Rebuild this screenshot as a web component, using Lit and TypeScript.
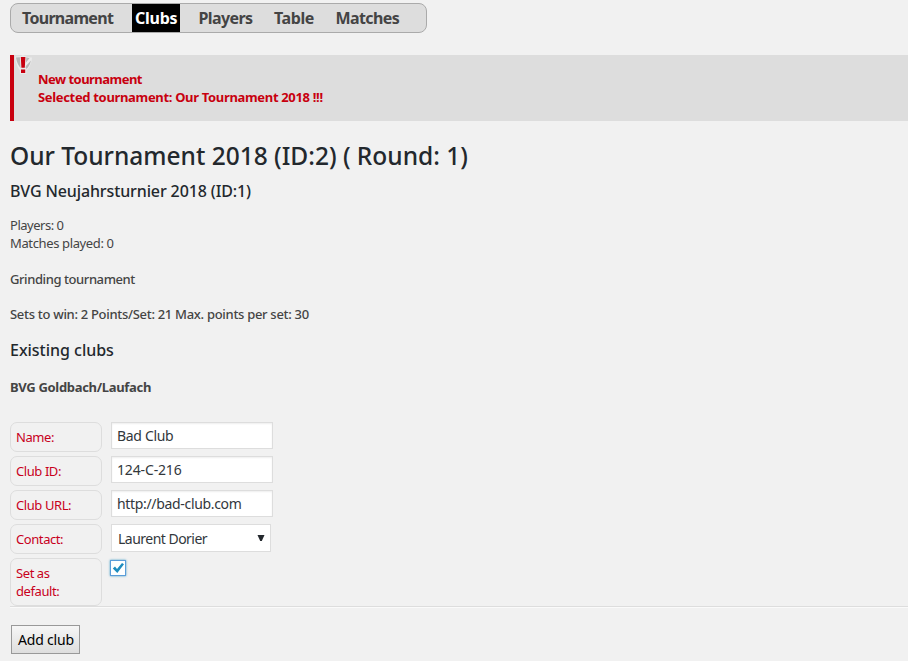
import { LitElement, html, css } from "lit";
import { customElement } from "lit/decorators.js";

@customElement("app-root")
export class AppRoot extends LitElement {
  static styles = css`
    * { box-sizing: border-box; }
    :host {
      display: block;
      height: 661px;
      overflow: hidden;
      padding: 3px 0 0 10px;
      background: #f1f1f1;
      color: #444;
      font: 400 13px/18px "Noto Sans", "Open Sans", sans-serif;
      letter-spacing: -0.4px;
      white-space: nowrap;
    }
    h1, h2, p { margin: 0; padding: 0; }
    nav {
      display: flex;
      width: 417px;
      height: 30px;
      border: 1px solid #aaa;
      border-radius: 8px;
      background: #ddd;
      font: 700 16px/28px "Noto Sans", sans-serif;
      letter-spacing: -0.5px;
    }
    nav a { padding-left: 3px; }
    .tournament { width: 121px; padding-left: 11px; letter-spacing: -0.7px; }
    .clubs { width: 48px; background: #000; color: #fff; letter-spacing: -0.25px; }
    .players { width: 76px; padding-left: 18.5px; letter-spacing: -0.62px; }
    .table { width: 62px; padding-left: 18px; letter-spacing: -0.4px; }
    .matches { padding-left: 17.5px; letter-spacing: -0.6px; }
    .notice {
      display: flex;
      height: 66px;
      margin-top: 22px;
      border-left: 4px solid #c8000f;
      background: #ddd;
      color: #c8000f;
      font-weight: 700;
    }
    .notice svg { flex: none; width: 18px; height: 20px; margin-right: 6px; }
    .notice div { padding-top: 15px; letter-spacing: -0.33px; }
    .notice .first { letter-spacing: -0.53px; }
    h1 {
      margin-top: 19px;
      color: #23282d;
      font: 500 24.5px/32px "Noto Sans", sans-serif;
      letter-spacing: -0.01px;
    }
    h2 {
      margin-top: 7px;
      color: #23282d;
      font: 500 16px/24px "Noto Sans", sans-serif;
      letter-spacing: -0.12px;
    }
    .stats { margin-top: 13px; }
    .stats p { letter-spacing: -0.48px; }
    .stats p + p { letter-spacing: -0.37px; }
    .kind { margin-top: 18px; font-weight: 500; letter-spacing: -0.42px; }
    .rules { margin-top: 17px; font-weight: 500; letter-spacing: -0.3px; }
    .existing { margin-top: 15px; letter-spacing: -0.02px; }
    .club { margin-top: 16px; font-weight: 700; letter-spacing: -0.32px; }
    .form {
      display: grid;
      grid-template-columns: 92px 1fr;
      column-gap: 9px;
      row-gap: 4px;
      margin-top: 26px;
      border-bottom: 1px solid #ddd;
      box-shadow: 0 1px #fafafa;
    }
    .label {
      min-height: 30px;
      padding: 5px;
      border: 1px solid #ddd;
      border-radius: 7px;
      color: #c8001c;
      white-space: normal;
      letter-spacing: -0.42px;
    }
    .last { height: 48px; padding-right: 20px; }
    .field, .select {
      width: 162px;
      height: 27px;
      padding-left: 5px;
      border: 1px solid #ddd;
      background: #fff;
      box-shadow: inset 0 1px 2px rgba(0, 0, 0, 0.07);
      color: #32373c;
      font-size: 14px;
      line-height: 26px;
      letter-spacing: -0.33px;
    }
    .code { letter-spacing: -0.15px; }
    .select {
      display: flex;
      align-items: flex-start;
      justify-content: space-between;
      width: 160px;
      height: 28px;
      padding: 1px 5px 0 6px;
      box-shadow: none;
      letter-spacing: -0.52px;
    }
    .select svg { width: 8px; height: 6px; margin-top: 9px; }
    .check {
      display: flex;
      width: 16px;
      height: 16px;
      margin: 2px 0 0 -1px;
      border: 1px solid #5b9dd9;
      background: #fff;
      box-shadow: 0 0 2px rgba(30, 140, 190, 0.8);
    }
    .check svg { width: 14px; height: 14px; }
    .button {
      width: 69px;
      height: 29px;
      margin: 18px 0 0 1px;
      padding: 0 0 0 6px;
      border: 1px solid #999;
      background: linear-gradient(#f6f6f6, #dedede);
      color: #000;
      font: 400 14px/28px "Noto Sans", sans-serif;
      letter-spacing: -0.2px;
      text-align: left;
    }
  `;

  render() {
    return html`
      <nav>
        <a class="tournament">Tournament</a><a class="clubs">Clubs</a><a class="players">Players</a><a class="table">Table</a><a class="matches">Matches</a>
      </nav>
      <section class="notice">
        <svg viewBox="0 0 18 20">
          <path d="M1 1.5 Q7 2 9 0 Q12 3 18 2.5 Q17.5 13 9 18.5 Q2 13 1 1.5Z" fill="#ebebeb" />
          <path d="M2 2.5 Q6 2.5 8 1.5 L8 14.5 Q3 10 2 2.5Z" fill="#b8b8b8" />
          <path d="M11 2 L15.5 3.2 L11 8.5Z M17 5.5 Q15.5 12 10 16.5 L10.5 12.5Z" fill="#b8b8b8" />
          <path d="M5.8 1 H12.4 L11.6 13 H12.3 V19 H5.9 V13 H6.6Z" fill="#eaeaea" />
          <path d="M6.8 2 H11.4 L10.8 12.8 H7.4Z M7 14.4 H11.2 V18 H7Z" fill="#c8000f" />
        </svg>
        <div>
          <p class="first">New tournament</p>
          <p>Selected tournament: Our Tournament 2018 !!!</p>
        </div>
      </section>
      <h1>Our Tournament 2018 (ID:2) ( Round: 1)</h1>
      <h2>BVG Neujahrsturnier 2018 (ID:1)</h2>
      <div class="stats"><p>Players: 0</p><p>Matches played: 0</p></div>
      <p class="kind">Grinding tournament</p>
      <p class="rules">Sets to win: 2 Points/Set: 21 Max. points per set: 30</p>
      <h2 class="existing">Existing clubs</h2>
      <p class="club">BVG Goldbach/Laufach</p>
      <div class="form">
        <div class="label">Name:</div><div class="field">Bad Club</div>
        <div class="label">Club ID:</div><div class="field code">124-C-216</div>
        <div class="label">Club URL:</div><div class="field">http://bad-club.com</div>
        <div class="label">Contact:</div>
        <div class="select">Laurent Dorier<svg viewBox="0 0 8 6"><path d="M.5 0 H7.5 L4.8 6 H3.2Z" fill="#23282d" /></svg></div>
        <div class="label last">Set as default:</div>
        <div class="check"><svg viewBox="0 0 14 14"><path d="M1.8 7.6 L4 5.6 L6 7.9 L11 2 L13 3.2 L6.3 12Z" fill="#1e8cbe" /></svg></div>
      </div>
      <button class="button">Add club</button>
    `;
  }
}
